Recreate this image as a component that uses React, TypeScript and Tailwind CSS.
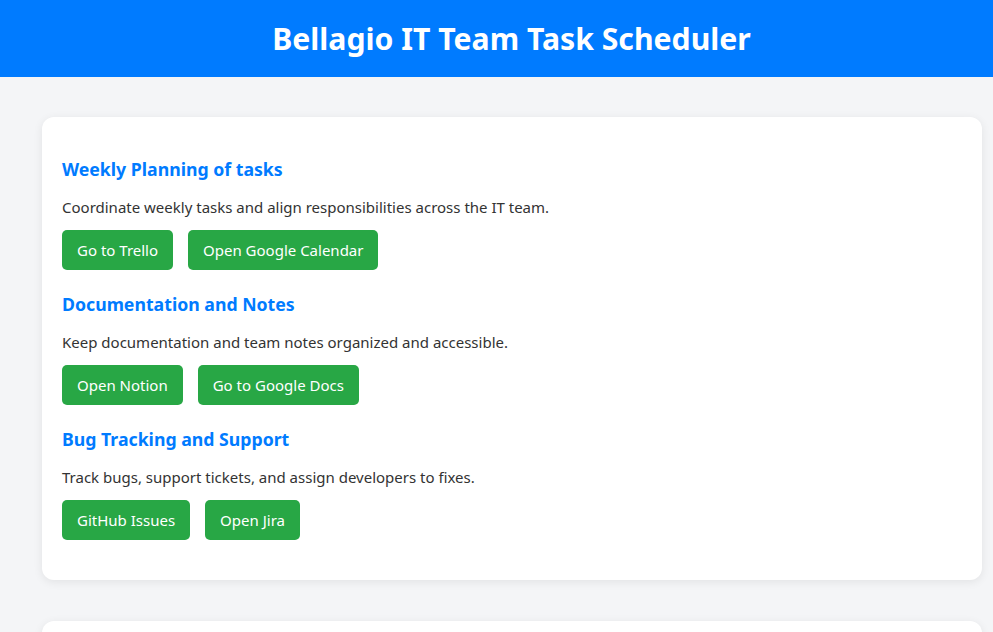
import React from "react";

const sections = [
  {
    title: "Weekly Planning of tasks",
    desc: "Coordinate weekly tasks and align responsibilities across the IT team.",
    buttons: ["Go to Trello", "Open Google Calendar"],
  },
  {
    title: "Documentation and Notes",
    desc: "Keep documentation and team notes organized and accessible.",
    buttons: ["Open Notion", "Go to Google Docs"],
  },
  {
    title: "Bug Tracking and Support",
    desc: "Track bugs, support tickets, and assign developers to fixes.",
    buttons: ["GitHub Issues", "Open Jira"],
  },
];

export default function App() {
  return (
    <div
      className="min-h-screen bg-[#f4f5f7] text-[#333333]"
      style={{ fontFamily: '"Noto Sans", "Open Sans", sans-serif' }}
    >
      <header className="bg-[#007bff] h-[77px] pl-[30px] flex items-center justify-center">
        <h1 className="text-white text-[30.2px] font-bold leading-[37px]">
          Bellagio IT Team Task Scheduler
        </h1>
      </header>
      <main className="pt-[40px] pl-[42px] pr-[11px] flex flex-col gap-[41px]">
        <div className="bg-white rounded-[12px] shadow-[0_2px_10px_rgba(0,0,0,0.08)] px-[20px] pt-[39px] pb-[40px] flex flex-col gap-[21px]">
          {sections.map((s) => (
            <section key={s.title} className="flex flex-col">
              <h3 className="text-[#007bff] text-[17.7px] font-bold leading-[25px] pt-[1px]">
                {s.title}
              </h3>
              <p className="mt-[15px] text-[15px] leading-[21px]">{s.desc}</p>
              <div className="mt-[12px] flex gap-[15px]">
                {s.buttons.map((b) => (
                  <button
                    key={b}
                    className="bg-[#28a745] text-white text-[15px] leading-[20px] h-[40px] px-[15px] rounded-[5px]"
                  >
                    {b}
                  </button>
                ))}
              </div>
            </section>
          ))}
        </div>
        <div className="bg-white rounded-[12px] shadow-[0_2px_10px_rgba(0,0,0,0.08)] h-[300px]" />
      </main>
    </div>
  );
}
